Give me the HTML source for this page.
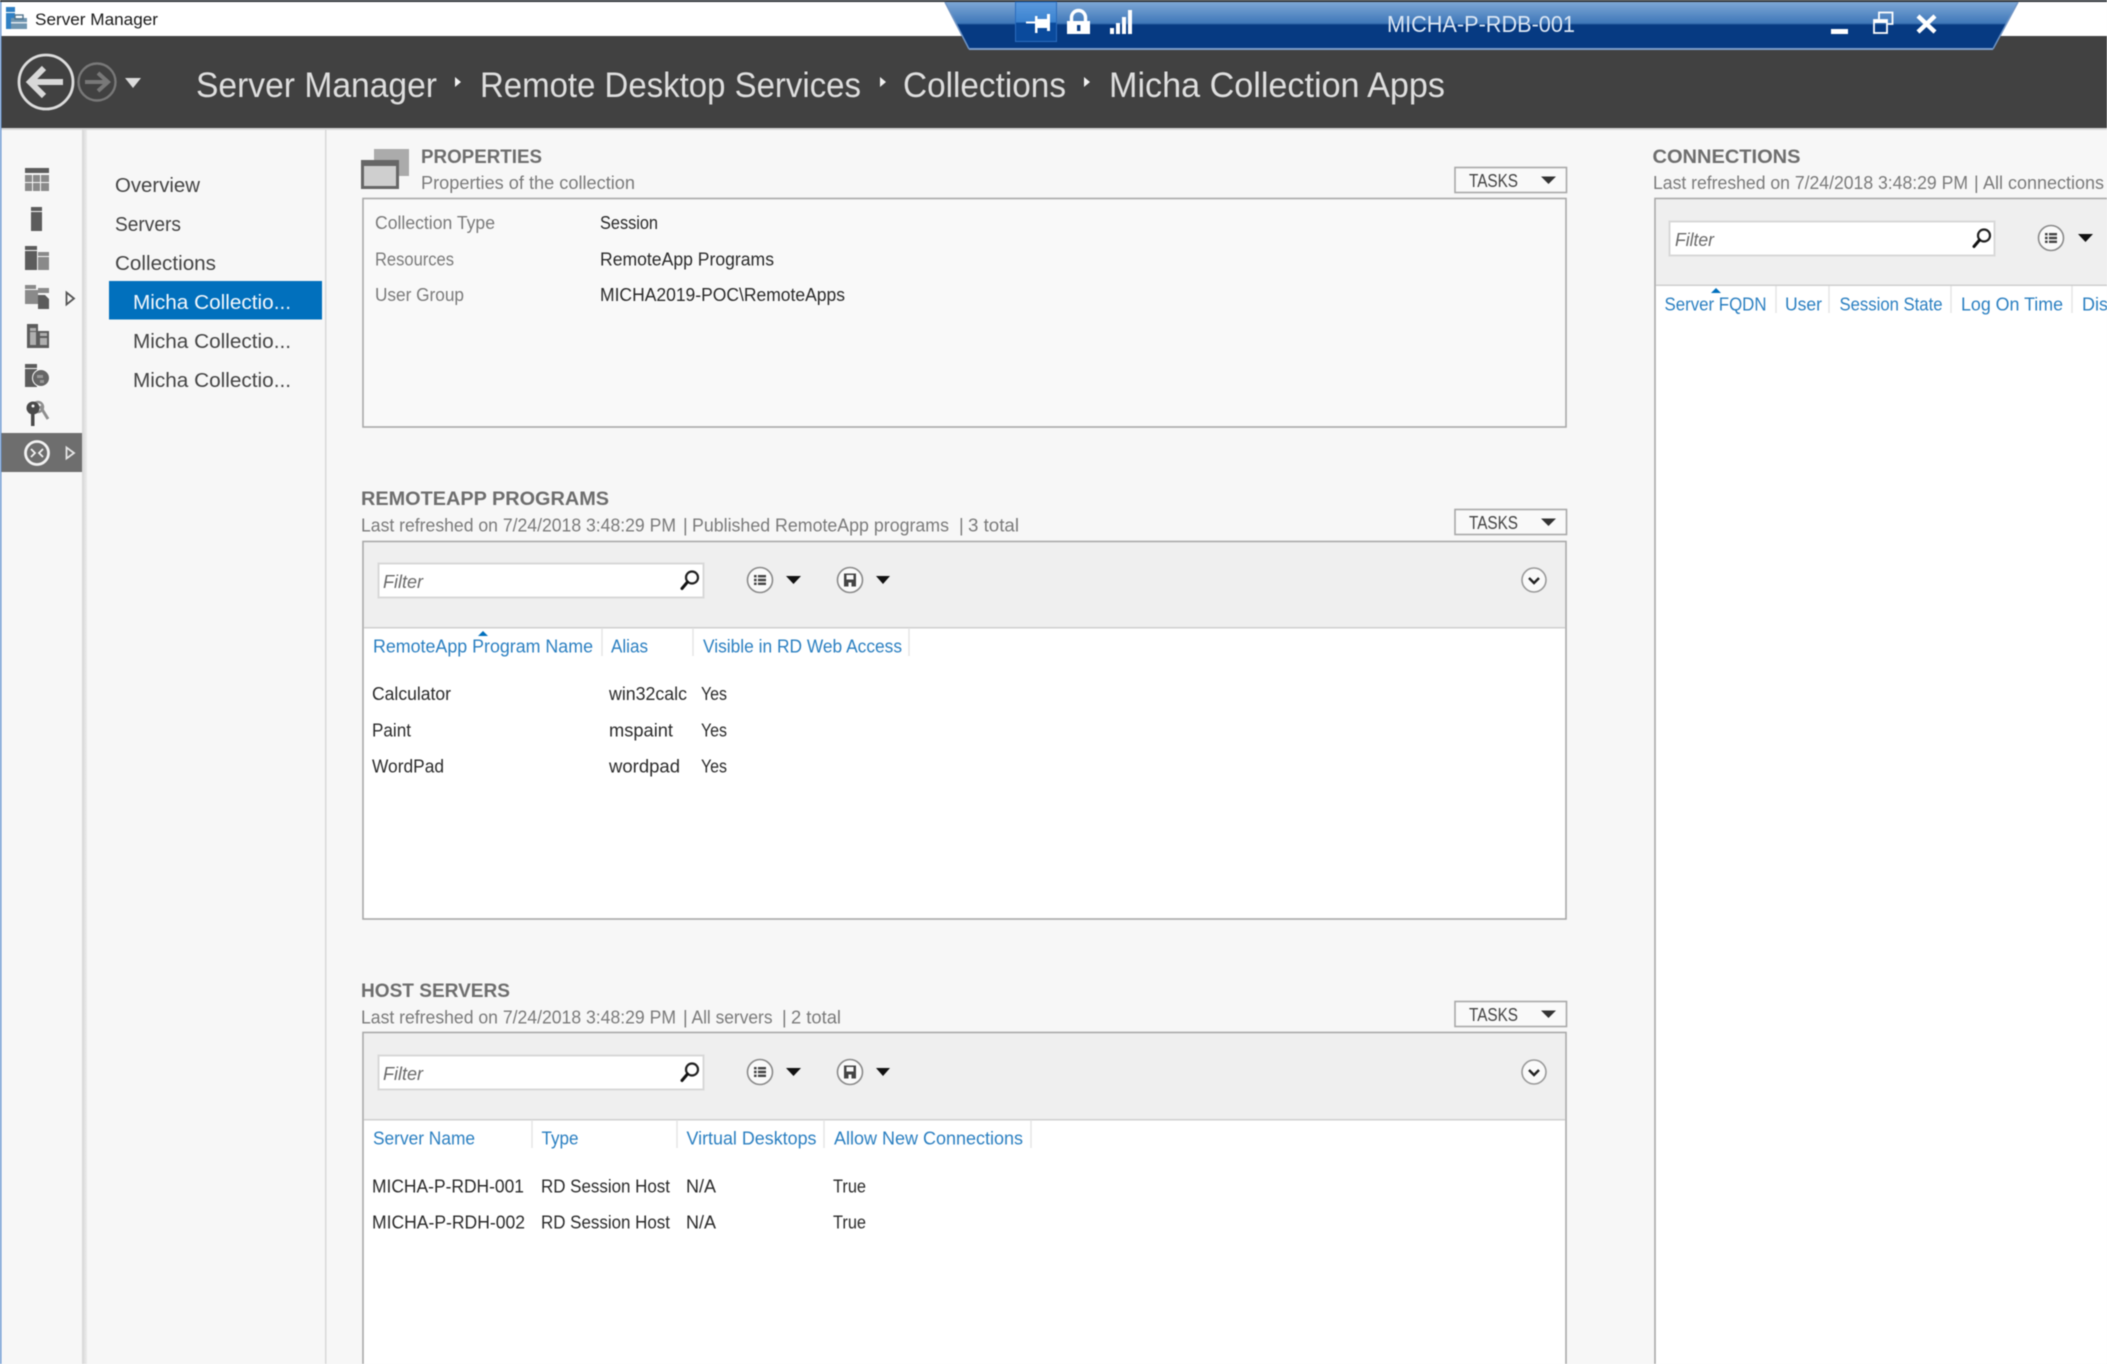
<!DOCTYPE html>
<html lang="en">
<head>
<meta charset="utf-8">
<title>Server Manager</title>
<style>
html,body{margin:0;padding:0;width:2107px;height:1364px;overflow:hidden;background:#f7f7f7}
svg{display:block;filter:blur(.6px)}
text{font-family:"Liberation Sans",sans-serif;font-size:18px;fill:#3a3a3a}
.crumb{font-size:35px;fill:#dedede}
.h{font-size:19.5px;font-weight:700;fill:#6e6e6e}
.sub{font-size:18px;fill:#7a7a7a}
.lbl{font-size:18px;fill:#7a7a7a}
.val{font-size:18px;fill:#2a2a2a}
.nav{font-size:20.5px;fill:#444}
.th{font-size:18px;fill:#2a7fc1}
.flt{font-size:18px;font-style:italic;fill:#6a6a6a}
.tsk{font-size:18px;fill:#444}
</style>
</head>
<body>
<svg width="2107" height="1364" viewBox="0 0 2107 1364" xmlns="http://www.w3.org/2000/svg">
<defs>
<linearGradient id="bar" x1="0" y1="0" x2="0" y2="1">
<stop offset="0" stop-color="#7ea7d6"/>
<stop offset=".45" stop-color="#3f78b9"/>
<stop offset=".49" stop-color="#063a82"/>
<stop offset="1" stop-color="#063a82"/>
</linearGradient>
<linearGradient id="pinbg" x1="0" y1="0" x2="0" y2="1">
<stop offset="0" stop-color="#5c9ade"/>
<stop offset=".5" stop-color="#3a82cf"/>
<stop offset=".53" stop-color="#0a4a9c"/>
<stop offset="1" stop-color="#0a4a9c"/>
</linearGradient>
<linearGradient id="shadow" x1="0" y1="0" x2="1" y2="0">
<stop offset="0" stop-color="#d6d6d6"/>
<stop offset="1" stop-color="#ececec"/>
</linearGradient>
<g id="srch"><circle cx="3" cy="-3" r="6" fill="none" stroke="#222" stroke-width="2.2"/><path d="M-1.500 1.500L-7 8" stroke="#111" stroke-width="3" stroke-linecap="round"/></g>
<g id="list"><circle r="12.5" fill="#fafafa" stroke="#8a8a8a" stroke-width="1.6"/><path d="M-6-5h2.600v2.400H-6zM-6-1.200h2.600v2.400H-6zM-6 2.600h2.600V5H-6zM-2-5h8v2.400h-8zM-2-1.200h8v2.400h-8zM-2 2.600h8V5h-8z" fill="#444"/></g>
<g id="save"><circle r="12.5" fill="#fafafa" stroke="#8a8a8a" stroke-width="1.6"/><path d="M-6-6.500H6V6.500H-6z" fill="#444"/><path d="M-3.500-5H3.500V-.5H-3.500z" fill="#fafafa"/><path d="M-1.500 2.500H1.500V6.500H-1.500z" fill="#fafafa"/></g>
<g id="coll"><circle r="12" fill="#fafafa" stroke="#9a9a9a" stroke-width="1.6"/><path d="M-5-2L0 3L5-2" fill="none" stroke="#222" stroke-width="2.4"/></g>
</defs>

<!-- page base -->
<rect width="2107" height="1364" fill="#f7f7f7"/>
<rect y="2" width="2107" height="34" fill="#fff"/>
<rect width="2107" height="2" fill="#2f3338"/>
<rect y="36" width="2107" height="92" fill="#414141"/>
<rect y="128" width="2107" height="2" fill="#d8d8d8"/>
<rect x="0" y="2" width="1.5" height="1362" fill="#6f9bd4"/>

<!-- app icon + title -->
<rect x="6" y="7" width="9" height="5" fill="#2f7fc4"/>
<rect x="6" y="13" width="9" height="16" fill="#2f7fc4"/>
<rect x="11" y="18" width="16" height="11" fill="#6f95b0"/>
<rect x="15" y="15" width="8" height="4" fill="none" stroke="#52748c" stroke-width="1.4"/>
<rect x="11" y="22" width="16" height="1.5" fill="#dfe8ee"/>
<text x="35" y="25" textLength="123" lengthAdjust="spacingAndGlyphs" style="font-size:16.5px;fill:#1a1a1a">Server Manager</text>

<!-- remote bar -->
<path d="M945 2L969 49H1993L2018 2Z" fill="url(#bar)"/>
<path d="M969 49H1993" stroke="#7d9dc9" stroke-width="2"/>
<path d="M945 2L969 49M2018 2L1993 49" stroke="#6f94c4" stroke-width="1.5" fill="none"/>
<rect x="1015" y="2" width="42" height="40" fill="url(#pinbg)"/>
<rect x="1015.5" y="2" width="41" height="39.5" fill="none" stroke="#2a6cbd" stroke-width="1"/>
<path d="M1026 21.500H1036V23.500H1026ZM1035 16H1037.500V33H1035ZM1037 19H1047V28H1037ZM1047 14H1050V31H1047Z" fill="#fff"/>
<path d="M1071.500 22V17.500a7 7 0 0 1 14 0V22" fill="none" stroke="#fff" stroke-width="3.4"/>
<rect x="1067" y="21" width="23" height="13" fill="#fff"/>
<rect x="1077" y="25" width="3.4" height="6" fill="#0a3f88"/>
<path d="M1110 28h4v6h-4zM1116 23h4v11h-4zM1122 17h4v17h-4zM1128 10h4v24h-4z" fill="#fff"/>
<text x="1387" y="32" textLength="188" lengthAdjust="spacingAndGlyphs" style="font-size:23px;fill:#dce7f4">MICHA-P-RDB-001</text>
<rect x="1831" y="29" width="17" height="5" fill="#fff"/>
<path d="M1879 19v-6.500h13.500V24H1888" fill="none" stroke="#fff" stroke-width="1.8"/>
<rect x="1874" y="20" width="13" height="13" fill="none" stroke="#fff" stroke-width="1.8"/>
<rect x="1874" y="20" width="13" height="3" fill="#fff"/>
<path d="M1918 16L1935 32M1935 16L1918 32" stroke="#fff" stroke-width="4.4"/>

<!-- nav arrows -->
<circle cx="46" cy="82" r="27" fill="#414141" stroke="#dcdcdc" stroke-width="2.8"/>
<path d="M31 82H63M44 68L30 82L44 96" fill="none" stroke="#d8d8d8" stroke-width="6"/>
<circle cx="97" cy="82" r="18.5" fill="#414141" stroke="#787878" stroke-width="2.4"/>
<path d="M85 82H107M98 73L108 82L98 91" fill="none" stroke="#787878" stroke-width="4"/>
<path d="M125 78H141L133 88Z" fill="#dcdcdc"/>

<!-- breadcrumb -->
<text class="crumb" x="196" y="97" textLength="241" lengthAdjust="spacingAndGlyphs">Server Manager</text>
<path d="M455 77L461 82L455 87Z" fill="#f2f2f2"/>
<text class="crumb" x="480" y="97" textLength="381" lengthAdjust="spacingAndGlyphs">Remote Desktop Services</text>
<path d="M880 77L886 82L880 87Z" fill="#f2f2f2"/>
<text class="crumb" x="903" y="97" textLength="163" lengthAdjust="spacingAndGlyphs">Collections</text>
<path d="M1084 77L1090 82L1084 87Z" fill="#f2f2f2"/>
<text class="crumb" x="1109" y="97" textLength="336" lengthAdjust="spacingAndGlyphs">Micha Collection Apps</text>

<!-- left icon rail -->
<rect x="82" y="130" width="5" height="1234" fill="url(#shadow)"/>
<rect x="325" y="130" width="1.5" height="1234" fill="#d9d9d9"/>
<rect x="1.5" y="433" width="80.5" height="39" fill="#6e6e6e"/>

<g fill="#5c5c5c">
<rect x="25" y="168" width="24" height="5"/>
<path d="M25 175h7v7h-7zM33 175h7v7h-7zM41 175h8v7h-8zM25 183h7v8h-7zM33 183h7v8h-7zM41 183h8v8h-8z" fill="#8a8a8a"/>
<rect x="31" y="207" width="11" height="4"/>
<rect x="31" y="212" width="11" height="19"/>
<rect x="25" y="246" width="12" height="4"/>
<rect x="25" y="251" width="12" height="19"/>
<rect x="38" y="252" width="11" height="4" fill="#8a8a8a"/>
<rect x="38" y="257" width="11" height="13" fill="#8a8a8a"/>
<path d="M25 285h11v4H25zM25 290h13v14H25zM38 288h11v5H38z" fill="#8a8a8a"/>
<path d="M38 295h7l4 4v10H38z"/>
<path d="M66.500 292.500L74 298.500L66.500 304.500Z" fill="none" stroke="#555" stroke-width="1.800"/>
<path d="M27 324h11v7h11v17H27z"/>
<path d="M30 328h6v3h-6zM30 332h6v13h-6zM40 333h7v3h-7zM40 338h7v7h-7z" fill="#b0b0b0"/>
<rect x="25" y="364" width="12" height="4"/>
<rect x="25" y="369" width="12" height="18"/>
<circle cx="41" cy="378" r="9" fill="#fafafa"/>
<circle cx="41" cy="378" r="8" fill="#666"/>
<path d="M37 375h6v3h-6zM40 380h4v3h-4z" fill="#999"/>
</g>
<path d="M40 406L48 419" stroke="#8f8f8f" stroke-width="3" fill="none"/>
<circle cx="38" cy="407" r="5" fill="none" stroke="#8f8f8f" stroke-width="2.400"/>
<circle cx="33" cy="408" r="6.500" fill="#4a4a4a"/>
<rect x="31" y="412" width="3.500" height="14" fill="#4a4a4a"/>
<circle cx="33" cy="406" r="1.500" fill="#fafafa"/>
<circle cx="37" cy="453" r="11.500" fill="#6e6e6e" stroke="#f2f2f2" stroke-width="2.800"/>
<path d="M31 449l4 4-4 4M43 449l-4 4 4 4" fill="none" stroke="#f2f2f2" stroke-width="1.800"/>
<path d="M66.500 447.500L74 453L66.500 458.500Z" fill="none" stroke="#e6e6e6" stroke-width="1.800"/>

<!-- side nav -->
<text class="nav" x="115" y="192" textLength="85" lengthAdjust="spacingAndGlyphs">Overview</text>
<text class="nav" x="115" y="231" textLength="66" lengthAdjust="spacingAndGlyphs">Servers</text>
<text class="nav" x="115" y="270" textLength="101" lengthAdjust="spacingAndGlyphs">Collections</text>
<rect x="109" y="281" width="213" height="38.500" fill="#0170bd"/>
<text class="nav" x="133" y="309" textLength="158" lengthAdjust="spacingAndGlyphs" style="fill:#f4f8fc">Micha Collectio...</text>
<text class="nav" x="133" y="348" textLength="158" lengthAdjust="spacingAndGlyphs">Micha Collectio...</text>
<text class="nav" x="133" y="387" textLength="158" lengthAdjust="spacingAndGlyphs">Micha Collectio...</text>

<!-- PROPERTIES -->
<rect x="374" y="149" width="35" height="27" fill="#ababab"/>
<rect x="362.500" y="161.500" width="35" height="26" fill="#cfcfcf" stroke="#666" stroke-width="3"/>
<rect x="362" y="160" width="36" height="6" fill="#666"/>
<text class="h" x="421" y="163" textLength="121" lengthAdjust="spacingAndGlyphs">PROPERTIES</text>
<text class="sub" x="421" y="189" textLength="214" lengthAdjust="spacingAndGlyphs">Properties of the collection</text>
<rect x="363" y="198.500" width="1203" height="228.500" fill="#f9f9f9" stroke="#a8a8a8" stroke-width="1.600"/>
<text class="lbl" x="375" y="229" textLength="120" lengthAdjust="spacingAndGlyphs">Collection Type</text>
<text class="lbl" x="375" y="265.500" textLength="79" lengthAdjust="spacingAndGlyphs">Resources</text>
<text class="lbl" x="375" y="301" textLength="89" lengthAdjust="spacingAndGlyphs">User Group</text>
<text class="val" x="600" y="229" textLength="58" lengthAdjust="spacingAndGlyphs">Session</text>
<text class="val" x="600" y="265.500" textLength="174" lengthAdjust="spacingAndGlyphs">RemoteApp Programs</text>
<text class="val" x="600" y="301" textLength="245" lengthAdjust="spacingAndGlyphs">MICHA2019-POC\RemoteApps</text>
<rect x="1455" y="167.500" width="111.500" height="25" fill="#f9f9f9" stroke="#a8a8a8" stroke-width="1.600"/>
<text class="tsk" x="1469" y="187" textLength="49" lengthAdjust="spacingAndGlyphs">TASKS</text>
<path d="M1541 176.500H1556L1548.500 184Z" fill="#333"/>

<!-- REMOTEAPP PROGRAMS -->
<text class="h" x="361" y="505" textLength="248" lengthAdjust="spacingAndGlyphs">REMOTEAPP PROGRAMS</text>
<text class="sub" x="361" y="531.500" textLength="315" lengthAdjust="spacingAndGlyphs">Last refreshed on 7/24/2018 3:48:29 PM</text>
<text class="sub" x="683" y="531.500">|</text>
<text class="sub" x="692" y="531.500" textLength="257" lengthAdjust="spacingAndGlyphs">Published RemoteApp programs</text>
<text class="sub" x="959" y="531.500">|</text>
<text class="sub" x="968" y="531.500" textLength="51" lengthAdjust="spacingAndGlyphs">3 total</text>
<rect x="1455" y="509.500" width="111.500" height="25" fill="#f9f9f9" stroke="#a8a8a8" stroke-width="1.600"/>
<text class="tsk" x="1469" y="529" textLength="49" lengthAdjust="spacingAndGlyphs">TASKS</text>
<path d="M1541 518.500H1556L1548.500 526Z" fill="#333"/>
<rect x="363" y="541.500" width="1203" height="377.500" fill="#fff" stroke="#a8a8a8" stroke-width="1.600"/>
<rect x="364" y="542.500" width="1201" height="84.500" fill="#efefef"/>
<rect x="364" y="627" width="1201" height="1.500" fill="#cfcfcf"/>
<rect x="378.500" y="563.500" width="325" height="34" fill="#fff" stroke="#d8d8d8" stroke-width="2"/>
<text class="flt" x="383" y="588" textLength="40" lengthAdjust="spacingAndGlyphs">Filter</text>
<use href="#srch" x="689" y="580.500"/>
<use href="#list" x="760" y="580"/>
<path d="M786 576H801L793.500 584Z" fill="#111"/>
<use href="#save" x="850" y="580"/>
<path d="M876 576H890L883 584Z" fill="#111"/>
<use href="#coll" x="1534" y="580"/>
<path d="M602 628V656M693 628V656M909 628V656" stroke="#e4e4e4" stroke-width="1.400"/>
<path d="M478 636L483 631L488 636Z" fill="#0170bd"/>
<text class="th" x="373" y="652.500" textLength="220" lengthAdjust="spacingAndGlyphs">RemoteApp Program Name</text>
<text class="th" x="611" y="652.500" textLength="37" lengthAdjust="spacingAndGlyphs">Alias</text>
<text class="th" x="703" y="652.500" textLength="199" lengthAdjust="spacingAndGlyphs">Visible in RD Web Access</text>
<text class="val" x="372" y="700" textLength="79" lengthAdjust="spacingAndGlyphs">Calculator</text>
<text class="val" x="609" y="700" textLength="78" lengthAdjust="spacingAndGlyphs">win32calc</text>
<text class="val" x="701" y="700" textLength="26" lengthAdjust="spacingAndGlyphs">Yes</text>
<text class="val" x="372" y="736.500" textLength="39" lengthAdjust="spacingAndGlyphs">Paint</text>
<text class="val" x="609" y="736.500" textLength="64" lengthAdjust="spacingAndGlyphs">mspaint</text>
<text class="val" x="701" y="736.500" textLength="26" lengthAdjust="spacingAndGlyphs">Yes</text>
<text class="val" x="372" y="772.500" textLength="72" lengthAdjust="spacingAndGlyphs">WordPad</text>
<text class="val" x="609" y="772.500" textLength="71" lengthAdjust="spacingAndGlyphs">wordpad</text>
<text class="val" x="701" y="772.500" textLength="26" lengthAdjust="spacingAndGlyphs">Yes</text>

<!-- HOST SERVERS -->
<text class="h" x="361" y="997" textLength="149" lengthAdjust="spacingAndGlyphs">HOST SERVERS</text>
<text class="sub" x="361" y="1023.500" textLength="315" lengthAdjust="spacingAndGlyphs">Last refreshed on 7/24/2018 3:48:29 PM</text>
<text class="sub" x="683" y="1023.500">|</text>
<text class="sub" x="691.500" y="1023.500" textLength="81" lengthAdjust="spacingAndGlyphs">All servers</text>
<text class="sub" x="782" y="1023.500">|</text>
<text class="sub" x="791" y="1023.500" textLength="50" lengthAdjust="spacingAndGlyphs">2 total</text>
<rect x="1455" y="1001.500" width="111.500" height="25" fill="#f9f9f9" stroke="#a8a8a8" stroke-width="1.600"/>
<text class="tsk" x="1469" y="1021" textLength="49" lengthAdjust="spacingAndGlyphs">TASKS</text>
<path d="M1541 1010.500H1556L1548.500 1018Z" fill="#333"/>
<rect x="363" y="1032.500" width="1203" height="340" fill="#fff" stroke="#a8a8a8" stroke-width="1.600"/>
<rect x="364" y="1033.500" width="1201" height="85.500" fill="#efefef"/>
<rect x="364" y="1119" width="1201" height="1.500" fill="#cfcfcf"/>
<rect x="378.500" y="1055.500" width="325" height="34" fill="#fff" stroke="#d8d8d8" stroke-width="2"/>
<text class="flt" x="383" y="1080" textLength="40" lengthAdjust="spacingAndGlyphs">Filter</text>
<use href="#srch" x="689" y="1072.500"/>
<use href="#list" x="760" y="1072"/>
<path d="M786 1068H801L793.500 1076Z" fill="#111"/>
<use href="#save" x="850" y="1072"/>
<path d="M876 1068H890L883 1076Z" fill="#111"/>
<use href="#coll" x="1534" y="1072"/>
<path d="M532 1120V1148M677 1120V1148M824 1120V1148M1031 1120V1148" stroke="#e4e4e4" stroke-width="1.400"/>
<text class="th" x="373" y="1144.500" textLength="102" lengthAdjust="spacingAndGlyphs">Server Name</text>
<text class="th" x="541.500" y="1144.500" textLength="37" lengthAdjust="spacingAndGlyphs">Type</text>
<text class="th" x="686.500" y="1144.500" textLength="130" lengthAdjust="spacingAndGlyphs">Virtual Desktops</text>
<text class="th" x="834" y="1144.500" textLength="189" lengthAdjust="spacingAndGlyphs">Allow New Connections</text>
<text class="val" x="372" y="1192.500" textLength="152" lengthAdjust="spacingAndGlyphs">MICHA-P-RDH-001</text>
<text class="val" x="541" y="1192.500" textLength="129" lengthAdjust="spacingAndGlyphs">RD Session Host</text>
<text class="val" x="686" y="1192.500" textLength="30" lengthAdjust="spacingAndGlyphs">N/A</text>
<text class="val" x="833" y="1192.500" textLength="33" lengthAdjust="spacingAndGlyphs">True</text>
<text class="val" x="372" y="1228.500" textLength="153" lengthAdjust="spacingAndGlyphs">MICHA-P-RDH-002</text>
<text class="val" x="541" y="1228.500" textLength="129" lengthAdjust="spacingAndGlyphs">RD Session Host</text>
<text class="val" x="686" y="1228.500" textLength="30" lengthAdjust="spacingAndGlyphs">N/A</text>
<text class="val" x="833" y="1228.500" textLength="33" lengthAdjust="spacingAndGlyphs">True</text>

<!-- CONNECTIONS -->
<text class="h" x="1652.500" y="163" textLength="148" lengthAdjust="spacingAndGlyphs">CONNECTIONS</text>
<text class="sub" x="1653" y="189" textLength="315" lengthAdjust="spacingAndGlyphs">Last refreshed on 7/24/2018 3:48:29 PM</text>
<text class="sub" x="1974" y="189">|</text>
<text class="sub" x="1983" y="189" textLength="121" lengthAdjust="spacingAndGlyphs">All connections</text>
<rect x="1655" y="198.500" width="470" height="1180" fill="#fff" stroke="#a8a8a8" stroke-width="1.600"/>
<rect x="1656" y="199.500" width="451" height="85" fill="#efefef"/>
<rect x="1656" y="284.500" width="451" height="1.500" fill="#cfcfcf"/>
<rect x="1669.500" y="221.500" width="325" height="34" fill="#fff" stroke="#d8d8d8" stroke-width="2"/>
<text class="flt" x="1675" y="246" textLength="39" lengthAdjust="spacingAndGlyphs">Filter</text>
<use href="#srch" x="1981" y="238.500"/>
<use href="#list" x="2051" y="238"/>
<path d="M2078 234H2093L2085.500 242Z" fill="#111"/>
<path d="M1776 286V313M1829 286V313M1951 286V313M2072 286V313" stroke="#e4e4e4" stroke-width="1.400"/>
<path d="M1711 293L1716 288L1721 293Z" fill="#0170bd"/>
<text class="th" x="1664.500" y="310.500" textLength="102" lengthAdjust="spacingAndGlyphs">Server FQDN</text>
<text class="th" x="1785" y="310.500" textLength="37" lengthAdjust="spacingAndGlyphs">User</text>
<text class="th" x="1839.500" y="310.500" textLength="103" lengthAdjust="spacingAndGlyphs">Session State</text>
<text class="th" x="1961" y="310.500" textLength="102" lengthAdjust="spacingAndGlyphs">Log On Time</text>
<text class="th" x="2082" y="310.500">Dis</text>
</svg>
</body>
</html>
